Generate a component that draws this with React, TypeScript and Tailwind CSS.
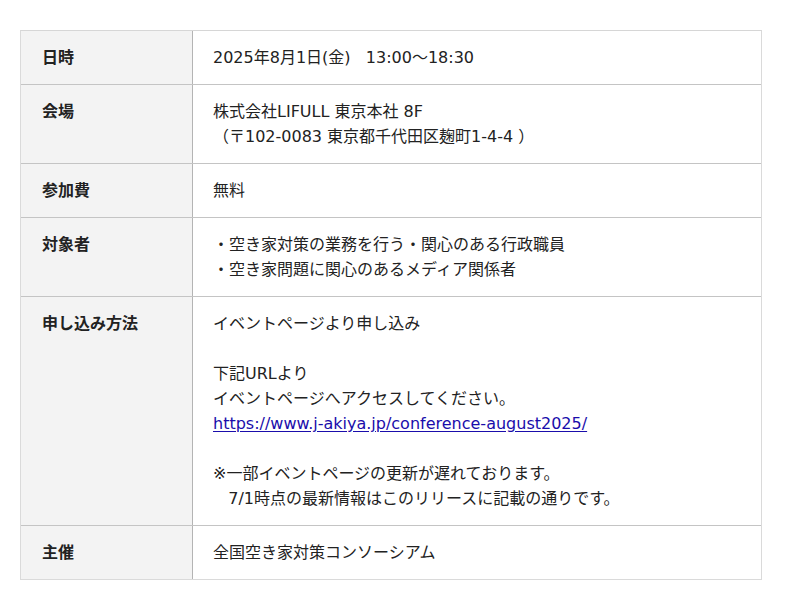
import React from "react";

const rows: { label: string; lines: React.ReactNode[] }[] = [
  { label: "日時", lines: ["2025年8月1日(金)\u00a0\u00a0\u00a013:00〜18:30"] },
  {
    label: "会場",
    lines: ["株式会社LIFULL 東京本社 8F", "（〒102-0083 東京都千代田区麹町1-4-4 ）"],
  },
  { label: "参加費", lines: ["無料"] },
  {
    label: "対象者",
    lines: ["・空き家対策の業務を行う・関心のある行政職員", "・空き家問題に関心のあるメディア関係者"],
  },
  {
    label: "申し込み方法",
    lines: [
      "イベントページより申し込み",
      "\u00a0",
      "下記URLより",
      "イベントページへアクセスしてください。",
      <a key="u" href="#" className="text-[#1a0dab] underline underline-offset-2">
        https://www.j-akiya.jp/conference-august2025/
      </a>,
      "\u00a0",
      "※一部イベントページの更新が遅れております。",
      "\u00a0\u00a0\u00a07/1時点の最新情報はこのリリースに記載の通りです。",
    ],
  },
  { label: "主催", lines: ["全国空き家対策コンソーシアム"] },
];

export default function App() {
  return (
    <div
      className="w-[800px] h-[610px] bg-white pt-[30px] pl-[20px] text-[16px] leading-[25px] text-[#222]"
      style={{ fontFamily: '"DejaVu Sans", "Noto Sans CJK JP", sans-serif' }}
    >
      <div className="w-[742px] border border-[#dadada] border-t-[#d6d6d6]">
        {rows.map((r, i) => (
          <div
            key={i}
            className={`flex ${i < rows.length - 1 ? "border-b border-[#c4c4c4]" : ""}`}
          >
            <div className="w-[172px] shrink-0 bg-[#f3f3f3] border-r border-[#b4b4b4] pl-[21px] pt-[14px] pb-[14px] font-bold">
              {r.label}
            </div>
            <div className="flex-1 pl-[20px] pt-[14px] pb-[14px]">
              {r.lines.map((l, j) => (
                <div key={j}>{l}</div>
              ))}
            </div>
          </div>
        ))}
      </div>
    </div>
  );
}
